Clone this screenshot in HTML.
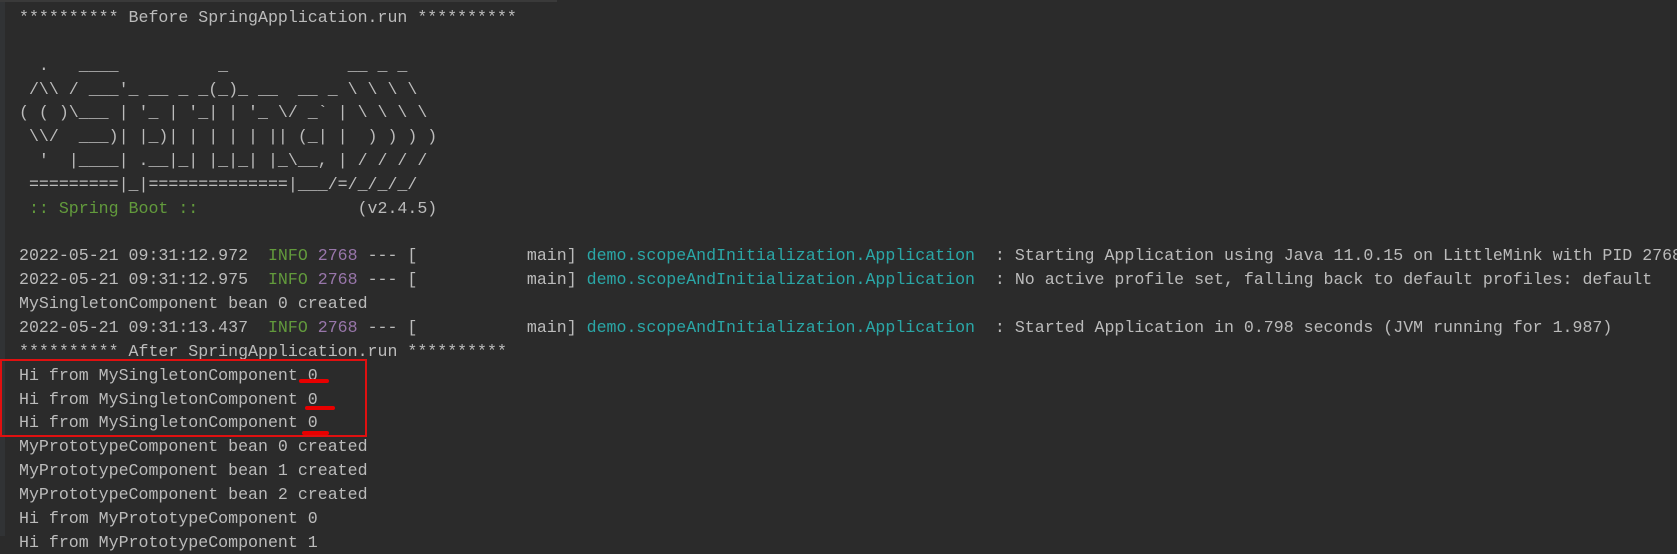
<!DOCTYPE html>
<html><head><meta charset="utf-8"><style>
html,body{margin:0;padding:0;}
body{width:1677px;height:536px;background:#2b2b2b;overflow:hidden;position:relative;}
.top{position:absolute;left:0;top:0;width:557px;height:2px;background:#3a3a3a;}
.left{position:absolute;left:0;top:0;width:5px;height:536px;background:#313335;}
pre{position:absolute;left:19px;top:6px;margin:0;font-family:"Liberation Mono",monospace;font-size:16.6px;line-height:23.85px;color:#bbbbbb;white-space:pre;}
.g{color:#629a3c}.p{color:#9876aa}.t{color:#2aa7a7}
.box{position:absolute;left:0;top:359px;width:363px;height:74px;border:2px solid #e01010;}
.u{position:absolute;height:4px;background:#e80000;border-radius:2px;}
</style></head><body>
<div class="left"></div><div class="top"></div>
<pre>********** Before SpringApplication.run **********

  .   ____          _            __ _ _
 /\\ / ___'_ __ _ _(_)_ __  __ _ \ \ \ \
( ( )\___ | '_ | '_| | '_ \/ _` | \ \ \ \
 \\/  ___)| |_)| | | | | || (_| |  ) ) ) )
  '  |____| .__|_| |_|_| |_\__, | / / / /
 =========|_|==============|___/=/_/_/_/
<span class="g"> :: Spring Boot :: </span>               (v2.4.5)

2022-05-21 09:31:12.972  <span class="g">INFO</span> <span class="p">2768</span> --- [           main] <span class="t">demo.scopeAndInitialization.Application </span> : Starting Application using Java 11.0.15 on LittleMink with PID 2768
2022-05-21 09:31:12.975  <span class="g">INFO</span> <span class="p">2768</span> --- [           main] <span class="t">demo.scopeAndInitialization.Application </span> : No active profile set, falling back to default profiles: default
MySingletonComponent bean 0 created
2022-05-21 09:31:13.437  <span class="g">INFO</span> <span class="p">2768</span> --- [           main] <span class="t">demo.scopeAndInitialization.Application </span> : Started Application in 0.798 seconds (JVM running for 1.987)
********** After SpringApplication.run **********
Hi from MySingletonComponent 0
Hi from MySingletonComponent 0
Hi from MySingletonComponent 0
MyPrototypeComponent bean 0 created
MyPrototypeComponent bean 1 created
MyPrototypeComponent bean 2 created
Hi from MyPrototypeComponent 0
Hi from MyPrototypeComponent 1</pre>
<div class="box"></div>
<div class="u" style="left:299px;top:379px;width:30px;"></div>
<div class="u" style="left:305px;top:406px;width:30px;"></div>
<div class="u" style="left:302px;top:431px;width:27px;"></div>
</body></html>
